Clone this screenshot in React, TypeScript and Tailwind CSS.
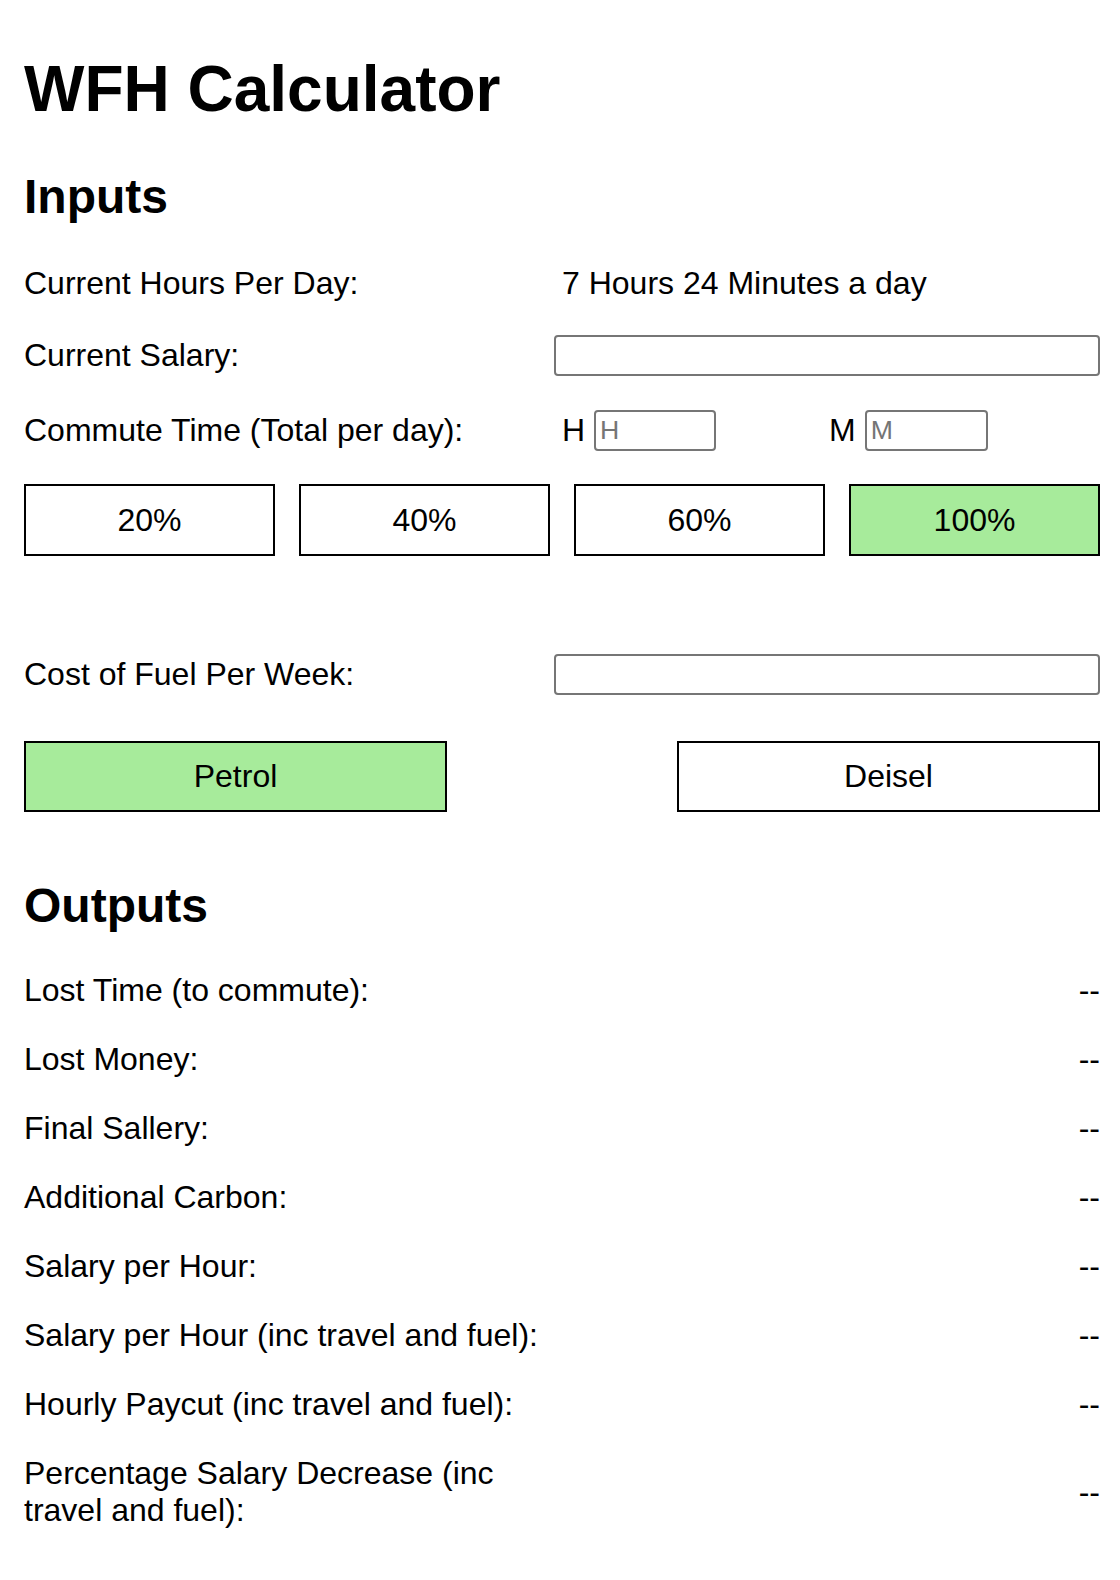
import React from 'react';

const percents = ['20%', '40%', '60%', '100%'];

const outputs = [
  'Lost Time (to commute):',
  'Lost Money:',
  'Final Sallery:',
  'Additional Carbon:',
  'Salary per Hour:',
  'Salary per Hour (inc travel and fuel):',
  'Hourly Paycut (inc travel and fuel):',
  'Percentage Salary Decrease (inc travel and fuel):',
];

const inputCls =
  'h-[41px] border-2 border-[#767676] rounded-[4px] bg-white px-[4px] text-[26.67px] text-black placeholder:text-[#757575] outline-none';

const App: React.FC = () => {
  const [percent, setPercent] = React.useState('100%');
  const [fuel, setFuel] = React.useState<'petrol' | 'deisel'>('petrol');

  return (
    <div className="min-h-screen bg-white pl-6 pr-[20px] pt-[52px] pb-10 text-black font-['Liberation_Sans',Arial,sans-serif]">
      <h1 className="text-[64px] font-bold leading-[74px]">WFH Calculator</h1>

      <h2 className="mt-[43px] text-[48px] font-bold leading-[55px]">Inputs</h2>

      <div className="mt-[39px] grid grid-cols-[530px_1fr] items-center min-h-[41px] text-[32px] leading-[37px]">
        <span>Current Hours Per Day:</span>
        <span className="pl-2">7 Hours 24 Minutes a day</span>
      </div>

      <div className="mt-[31px] grid grid-cols-[530px_1fr] items-center min-h-[41px] text-[32px] leading-[37px]">
        <span>Current Salary:</span>
        <input type="text" className={`${inputCls} w-full`} />
      </div>

      <div className="mt-[34px] grid grid-cols-[530px_1fr] items-center min-h-[41px] text-[32px] leading-[37px]">
        <span>Commute Time (Total per day):</span>
        <div className="flex items-center pl-2">
          <span>H</span>
          <input type="text" placeholder="H" className={`${inputCls} ml-[9px] w-[122px]`} />
          <span className="ml-[113px]">M</span>
          <input type="text" placeholder="M" className={`${inputCls} ml-[9px] w-[123px]`} />
        </div>
      </div>

      <div className="mt-[33px] grid grid-cols-4 gap-6">
        {percents.map((p) => (
          <button
            key={p}
            type="button"
            onClick={() => setPercent(p)}
            className={`h-[72px] border-2 border-black text-[32px] leading-[37px] ${
              percent === p ? 'bg-[#a7eb9b]' : 'bg-white'
            }`}
          >
            {p}
          </button>
        ))}
      </div>

      <div className="mt-[98px] grid grid-cols-[530px_1fr] items-center min-h-[41px] text-[32px] leading-[37px]">
        <span>Cost of Fuel Per Week:</span>
        <input type="text" className={`${inputCls} w-full`} />
      </div>

      <div className="mt-[46px] flex justify-between">
        <button
          type="button"
          onClick={() => setFuel('petrol')}
          className={`h-[71px] w-[423px] border-2 border-black text-[32px] leading-[37px] ${
            fuel === 'petrol' ? 'bg-[#a7eb9b]' : 'bg-white'
          }`}
        >
          Petrol
        </button>
        <button
          type="button"
          onClick={() => setFuel('deisel')}
          className={`h-[71px] w-[423px] border-2 border-black text-[32px] leading-[37px] ${
            fuel === 'deisel' ? 'bg-[#a7eb9b]' : 'bg-white'
          }`}
        >
          Deisel
        </button>
      </div>

      <h2 className="mt-[66px] text-[48px] font-bold leading-[55px]">Outputs</h2>

      <div className="mt-[39px] flex flex-col gap-8 text-[32px] leading-[37px]">
        {outputs.map((label) => (
          <div key={label} className="grid grid-cols-[530px_1fr] items-center">
            <span>{label}</span>
            <span className="text-right">--</span>
          </div>
        ))}
      </div>
    </div>
  );
};

export default App;
